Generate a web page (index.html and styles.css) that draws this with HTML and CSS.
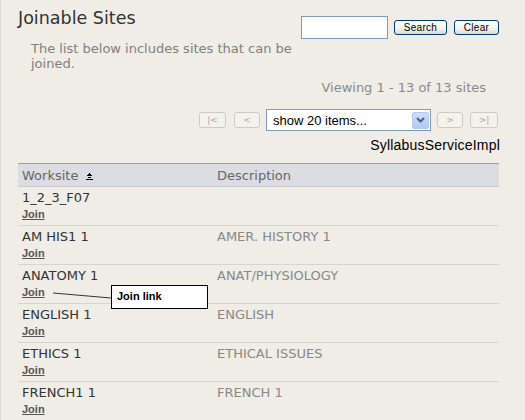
FILE: index.html
```html
<!DOCTYPE html>
<html lang="en">
<head>
<meta charset="utf-8">
<title>Joinable Sites</title>
<link rel="stylesheet" href="styles.css">
</head>
<body>
<div class="page">
  <div class="top">
    <h1 class="title">Joinable Sites</h1>
    <form class="search">
      <input class="search-input" type="text">
      <button class="xp-btn btn-search" type="button">Search</button>
      <button class="xp-btn btn-clear" type="button">Clear</button>
    </form>
  </div>
  <p class="instruction">The list below includes sites that can be<br>joined.</p>
  <div class="viewing">Viewing 1 - 13 of 13 sites</div>
  <div class="pager">
    <span class="pg-btn pg-first">|&lt;</span>
    <span class="pg-btn pg-prev">&lt;</span>
    <div class="fake-select">
      <span class="fake-select-text">show 20 items...</span>
      <span class="fake-select-arrow">
        <svg width="9" height="6" viewBox="0 0 9 6"><path d="M1 1 L4.5 4.5 L8 1" fill="none" stroke="#4d6185" stroke-width="2"/></svg>
      </span>
    </div>
    <span class="pg-btn pg-next">&gt;</span>
    <span class="pg-btn pg-last">&gt;|</span>
  </div>
  <div class="toolname">SyllabusServiceImpl</div>
  <table class="sites">
    <thead>
      <tr>
        <th class="col-site">Worksite <svg class="sort-icon" width="7" height="7" viewBox="0 0 7 7"><rect x="3" y="0" width="1" height="1"/><rect x="2" y="1" width="3" height="1"/><rect x="1" y="2" width="5" height="1"/><rect x="2" y="4" width="3" height="1"/><rect x="0" y="6" width="7" height="1"/></svg></th>
        <th class="col-desc">Description</th>
      </tr>
    </thead>
    <tbody>
      <tr><td class="col-site"><div class="site-name">1_2_3_F07</div><a class="join" href="#">Join</a></td><td class="col-desc"></td></tr>
      <tr><td class="col-site"><div class="site-name">AM HIS1 1</div><a class="join" href="#">Join</a></td><td class="col-desc">AMER. HISTORY 1</td></tr>
      <tr><td class="col-site"><div class="site-name">ANATOMY 1</div><a class="join" href="#">Join</a></td><td class="col-desc">ANAT/PHYSIOLOGY</td></tr>
      <tr><td class="col-site"><div class="site-name">ENGLISH 1</div><a class="join" href="#">Join</a></td><td class="col-desc">ENGLISH</td></tr>
      <tr><td class="col-site"><div class="site-name">ETHICS 1</div><a class="join" href="#">Join</a></td><td class="col-desc">ETHICAL ISSUES</td></tr>
      <tr><td class="col-site"><div class="site-name">FRENCH1 1</div><a class="join" href="#">Join</a></td><td class="col-desc">FRENCH 1</td></tr>
    </tbody>
  </table>
  <svg class="callout-line" width="60" height="8" viewBox="0 0 60 8"><line x1="0" y1="1" x2="58" y2="6" stroke="#333" stroke-width="1"/></svg>
  <div class="callout">Join link</div>
</div>
</body>
</html>
```

FILE: styles.css
```css
html, body {
  margin: 0;
  padding: 0;
}
body {
  background: #efede6;
  width: 525px;
  height: 420px;
  overflow: hidden;
  font-family: "DejaVu Sans", Verdana, sans-serif;
  font-size: 13px;
}
.page {
  position: relative;
  border-left: 1px solid #dedbd2;
  padding: 0 26px 0 17px;
  height: 420px;
  box-sizing: border-box;
}
.top {
  display: flex;
  justify-content: space-between;
  align-items: flex-start;
}
.title {
  margin: 8px 0 0 0;
  font-size: 17.5px;
  font-weight: normal;
  line-height: 20px;
  color: #333;
}
.search {
  margin: 16px 0 0 0;
  display: flex;
  align-items: center;
}
.search-input {
  width: 87px;
  height: 23px;
  box-sizing: border-box;
  border: 1px solid #7f9db9;
  background: #fff;
  margin: 0;
  padding: 0 2px;
}
.xp-btn {
  height: 15px;
  box-sizing: border-box;
  border: 1px solid #003c74;
  border-radius: 3px;
  background: linear-gradient(#ffffff, #f2f1ea 60%, #dcd9cb);
  font-family: "Liberation Sans", Arial, sans-serif;
  font-size: 10px;
  letter-spacing: 0.3px;
  line-height: 12px;
  padding: 0;
  color: #000;
  margin: 0;
}
.btn-search {
  width: 53px;
  margin-left: 6px;
}
.btn-clear {
  width: 45px;
  margin-left: 7px;
}
.instruction {
  margin: 2px 0 0 13px;
  line-height: 15px;
  color: #808080;
}
.viewing {
  margin: 9px 13px 0 0;
  text-align: right;
  line-height: 15px;
  color: #8a8a8a;
}
.pager {
  margin: 14px 1px 0 0;
  display: flex;
  justify-content: flex-end;
  align-items: center;
  height: 22px;
}
.pg-btn {
  width: 27px;
  height: 16px;
  box-sizing: border-box;
  border: 1px solid #cfccbd;
  border-radius: 3px;
  background: #f3f2eb;
  color: #a8a8a8;
  font-size: 9px;
  line-height: 14px;
  text-align: center;
}
.pg-prev { width: 26px; margin-left: 8px; }
.pg-next { width: 26px; }
.pg-last { width: 28px; margin-left: 7px; }
.fake-select {
  width: 165px;
  height: 22px;
  box-sizing: border-box;
  border: 1px solid #7f9db9;
  background: #fff;
  margin: 0 6px;
  display: flex;
  align-items: center;
  justify-content: space-between;
  padding: 0 1px 0 6px;
}
.fake-select-text {
  font-family: "Liberation Sans", Arial, sans-serif;
  font-size: 13px;
  color: #000;
}
.fake-select-arrow {
  width: 17px;
  height: 17px;
  box-sizing: border-box;
  border: 1px solid #b6c9f3;
  border-radius: 2px;
  background: linear-gradient(#cddcfb, #b3c8f5);
  display: flex;
  align-items: center;
  justify-content: center;
}
.toolname {
  margin: 7px -1px 0 0;
  text-align: right;
  font-family: "Liberation Sans", Arial, sans-serif;
  font-size: 14px;
  letter-spacing: 0.2px;
  line-height: 15px;
  color: #000;
}
.sites {
  margin-top: 10px;
  width: 481px;
  border-collapse: collapse;
}
.sites th {
  background: #dcdde2;
  border-top: 1px solid #9c9c9c;
  border-bottom: 1px solid #c9c9cd;
  height: 22px;
  padding: 0 4px;
  text-align: left;
  font-weight: normal;
  color: #666;
  line-height: 15px;
  vertical-align: middle;
}
.sites .col-site {
  width: 187px;
}
.sort-icon {
  fill: #000;
  margin-left: 3px;
  vertical-align: 0;
}
.sites td {
  border-bottom: 1px solid #d6d4ce;
  padding: 3px 4px 4px 4px;
  vertical-align: top;
  line-height: 15px;
}
.site-name {
  color: #333;
  line-height: 15px;
  height: 15px;
}
.join {
  display: block;
  width: max-content;
  height: 13px;
  margin-top: 3px;
  font-family: "Liberation Sans", Arial, sans-serif;
  font-size: 11px;
  font-weight: bold;
  line-height: 13px;
  color: #555;
  text-decoration: underline;
}
.sites td.col-desc {
  color: #888;
}
.callout-line {
  position: absolute;
  left: 52px;
  top: 292px;
}
.callout {
  position: absolute;
  left: 110px;
  top: 285px;
  width: 97px;
  height: 24px;
  box-sizing: border-box;
  border: 1px solid #000;
  background: #fff;
  padding-left: 5px;
  font-family: "Liberation Sans", Arial, sans-serif;
  font-size: 11px;
  font-weight: bold;
  line-height: 20px;
  color: #000;
}
```
